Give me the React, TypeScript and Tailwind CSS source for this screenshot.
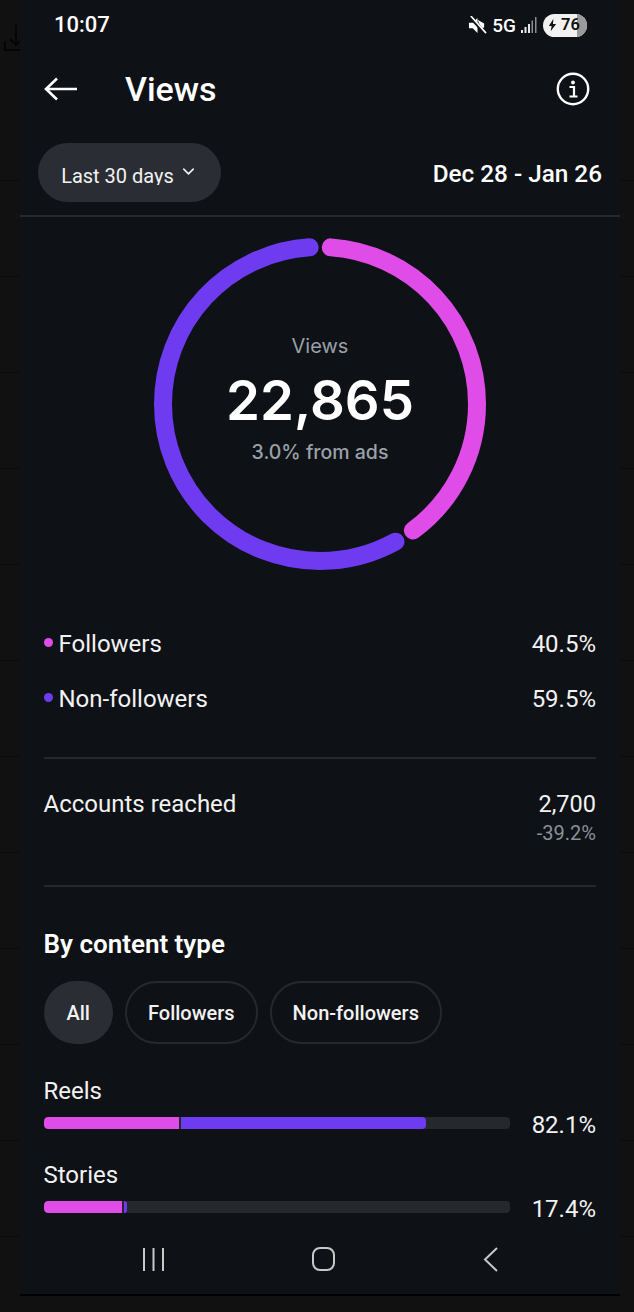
import { ChevronDown } from "lucide-react";

const PINK = "bg-[#e04ce8]";
const PURPLE = "bg-[#6f3bf0]";

// faint row rules that show through in the strips either side of the phone
function SideStrip({ className }: { className: string }) {
  return (
    <div className={`flex shrink-0 flex-col gap-[95px] pt-[180px] ${className}`}>
      {Array.from({ length: 12 }, (_, i) => (
        <div key={i} className="h-px bg-[#0b0b0b]" />
      ))}
    </div>
  );
}

function StatusBar() {
  return (
    <div className="flex h-[50px] items-center justify-between pr-[33px] pl-[34px]">
      <span className="text-[22px] leading-none font-medium text-white">10:07</span>
      <div className="flex items-center">
        <svg viewBox="0 0 20 20" className="h-[19px] w-[19px] text-white" fill="currentColor">
          <path d="M1 7h4l5-5v16l-5-5H1z" />
          <path d="M10 4l7 4v4l-3 1z" />
          <path d="M2 1l16 17" stroke="#0e1116" strokeWidth="3.500" />
          <path d="M3 0l16 18" stroke="currentColor" strokeWidth="1.700" />
        </svg>
        <span className="ml-[5px] text-[19px] leading-none font-medium text-white">5G</span>
        <svg viewBox="0 0 16 16" className="ml-[5px] h-[16px] w-[16px]" fill="#e5e7eb">
          <rect x="0" y="13" width="2" height="3" />
          <rect x="3.500" y="10" width="2" height="6" />
          <rect x="7" y="7" width="2" height="9" />
          <rect x="10.500" y="3.500" width="1.500" height="12.500" fill="#8b8d91" />
          <rect x="14" y="0" width="1.500" height="16" fill="#8b8d91" />
        </svg>
        <div className="relative ml-[6px] flex h-[23px] w-[44px] items-center overflow-hidden rounded-full bg-[#f2f2f2] pl-[5px]">
          <div className="absolute inset-y-0 right-0 w-[10px] bg-[#9a9a9a]" />
          <svg viewBox="0 0 10 14" className="relative h-[14px] w-[9px]" fill="#111">
            <path d="M6 0L1 8h3l-1 6 6-8H5.500z" />
          </svg>
          <span className="relative ml-[4px] text-[16.500px] leading-none font-semibold text-[#111]">76</span>
        </div>
      </div>
    </div>
  );
}

function Header() {
  return (
    <div className="flex h-[78px] items-center pr-[30px] pl-[24px]">
      <svg viewBox="0 0 34 24" className="h-[24px] w-[34px]" fill="none" stroke="white" strokeWidth="2.600">
        <path d="M33 12H2M13 1.500L2 12l11 10.500" />
      </svg>
      <h1 className="ml-[47px] text-[34px] leading-none font-medium text-white">Views</h1>
      <svg viewBox="0 0 34 34" className="ml-auto h-[34px] w-[34px]" fill="none">
        <circle cx="17" cy="17" r="15.200" stroke="white" strokeWidth="2.400" />
        <circle cx="17" cy="10.500" r="1.900" fill="white" />
        <path d="M13.500 15h4.500v9M13.500 24.500h8" stroke="white" strokeWidth="2.200" />
      </svg>
    </div>
  );
}

function DateRow() {
  return (
    <div className="flex h-[89px] items-start justify-between border-b-2 border-[#25282d] pt-[15px] pr-[18px] pl-[18px]">
      <div className="flex h-[59px] w-[183px] items-center justify-center rounded-full bg-[#2a2d33]">
        {/* the capture cuts the descender of "days" off */}
        <span className="mt-[4px] mr-[1px] h-[21px] overflow-hidden text-[20px] leading-[24px] text-[#f2f2f2]">Last 30 days</span>
        <ChevronDown className="mb-[3px] ml-[4px] h-[19px] w-[19px] text-[#f2f2f2]" strokeWidth={2} />
      </div>
      <span className="mt-[19px] text-[24.300px] leading-none font-medium text-white">Dec 28 - Jan 26</span>
    </div>
  );
}

function Ring() {
  const radius = 157;
  const circumference = 2 * Math.PI * radius;
  return (
    <div className="relative mx-auto mt-[21px] h-[332px] w-[332px]">
      <svg viewBox="0 0 332 332" className="h-full w-full -rotate-90" fill="none">
        <circle
          cx="166"
          cy="166"
          r={radius}
          stroke="#e04ce8"
          strokeWidth="18"
          strokeLinecap="round"
          strokeDasharray={`${circumference * 0.388} ${circumference}`}
          strokeDashoffset={-circumference * 0.011}
        />
        <circle
          cx="166"
          cy="166"
          r={radius}
          stroke="#6f3bf0"
          strokeWidth="18"
          strokeLinecap="round"
          strokeDasharray={`${circumference * 0.569} ${circumference}`}
          strokeDashoffset={-circumference * 0.42}
        />
      </svg>
      <div className="absolute inset-0 flex flex-col items-center font-['Inter',sans-serif]">
        <span className="mt-[96px] text-[20px] leading-[24px] text-[#9aa0a8]">Views</span>
        <span className="mt-[10px] text-[54.500px] leading-[64px] font-semibold text-white">22,865</span>
        <span className="mt-[8px] text-[19.500px] leading-[24px] font-medium text-[#9aa0a8]">3.0% from ads</span>
      </div>
    </div>
  );
}

function Legend({ color, label, value }: { color: string; label: string; value: string }) {
  return (
    <div className="flex h-[55px] items-center justify-between">
      <div className="flex items-center">
        <span className={`mb-[2px] h-[9px] w-[9px] rounded-full ${color}`} />
        <span className="ml-[6px] text-[24px] leading-none text-[#f2f2f2]">{label}</span>
      </div>
      <span className="text-[24px] leading-none text-[#f2f2f2]">{value}</span>
    </div>
  );
}

function Chip({ label, active }: { label: string; active?: boolean }) {
  return (
    <div
      className={`flex h-[63px] items-center justify-center rounded-full text-[20px] leading-none font-medium text-[#f2f2f2] ${
        active ? "bg-[#2a2d33] px-[23px]" : "border-2 border-[#25282d] px-[21px]"
      }`}
    >
      {label}
    </div>
  );
}

function TypeBar({ label, pink, purple, value }: { label: string; pink: number; purple: number; value: string }) {
  return (
    <div className="h-[84px]">
      <div className="text-[24px] leading-[28px] text-[#f2f2f2]">{label}</div>
      <div className="flex items-center justify-between">
        <div className="mt-[4px] flex h-[12px] w-[466px] gap-[2px] overflow-hidden rounded-[4px] bg-[#25282d]">
          <div className={`h-full rounded-l-[4px] ${PINK}`} style={{ width: pink }} />
          <div className={`h-full rounded-r-[4px] ${PURPLE}`} style={{ width: purple }} />
        </div>
        <span className="mt-[8px] text-[24px] leading-none text-[#f2f2f2]">{value}</span>
      </div>
    </div>
  );
}

function NavBar() {
  return (
    <div className="flex h-[60px] items-center justify-between pr-[122px] pb-[4px] pl-[123px]">
      <svg viewBox="0 0 21 23" className="h-[23px] w-[21px]" stroke="#c8c8c8" strokeWidth="2">
        <path d="M1 0v23M10.500 0v23M20 0v23" />
      </svg>
      <div className="h-[24px] w-[23px] rounded-[8px] border-2 border-[#c8c8c8]" />
      <svg viewBox="0 0 15 25" className="h-[25px] w-[15px]" fill="none" stroke="#c8c8c8" strokeWidth="2">
        <path d="M14 1L2 12.500 14 24" />
      </svg>
    </div>
  );
}

export default function App() {
  return (
    <div className="relative flex h-[1312px] w-[634px] items-start overflow-hidden bg-[#111112] font-['Roboto',sans-serif]">
      <SideStrip className="w-[20px]" />
      <svg
        viewBox="0 0 16 28"
        className="absolute top-[24px] left-[4px] h-[28px] w-[16px]"
        fill="none"
        stroke="#050505"
        strokeWidth="2"
      >
        <path d="M12 1v20M6 15l6 6 4-4M1 17v9h15" />
      </svg>
      <div className="h-[1296px] w-[600px] shrink-0 overflow-hidden border-b-2 border-black bg-[#0e1116]">
        <StatusBar />
        <Header />
        <DateRow />
        <Ring />
        <div className="mt-[46px] mr-[24px] ml-[23.500px]">
          <Legend color={PINK} label="Followers" value="40.5%" />
          <Legend color={PURPLE} label="Non-followers" value="59.5%" />
          <div className="mt-[31px] flex h-[130px] justify-between border-y-2 border-[#25282d] pt-[30px]">
            <span className="text-[24px] leading-[30px] text-[#f2f2f2]">Accounts reached</span>
            <div className="flex flex-col items-end">
              <span className="text-[23.500px] leading-[30px] text-[#f2f2f2]">2,700</span>
              <span className="text-[20px] leading-[28px] text-[#8b9098]">-39.2%</span>
            </div>
          </div>
          <h2 className="mt-[41px] text-[26px] leading-[32px] font-semibold text-white">By content type</h2>
          <div className="mt-[21px] flex gap-[12px]">
            <Chip label="All" active />
            <Chip label="Followers" />
            <Chip label="Non-followers" />
          </div>
          <div className="mt-[33px] h-[154px] overflow-hidden">
            <TypeBar label="Reels" pink={135} purple={245} value="82.1%" />
            <TypeBar label="Stories" pink={78} purple={3} value="17.4%" />
          </div>
        </div>
        <NavBar />
      </div>
      <SideStrip className="w-[14px]" />
    </div>
  );
}
